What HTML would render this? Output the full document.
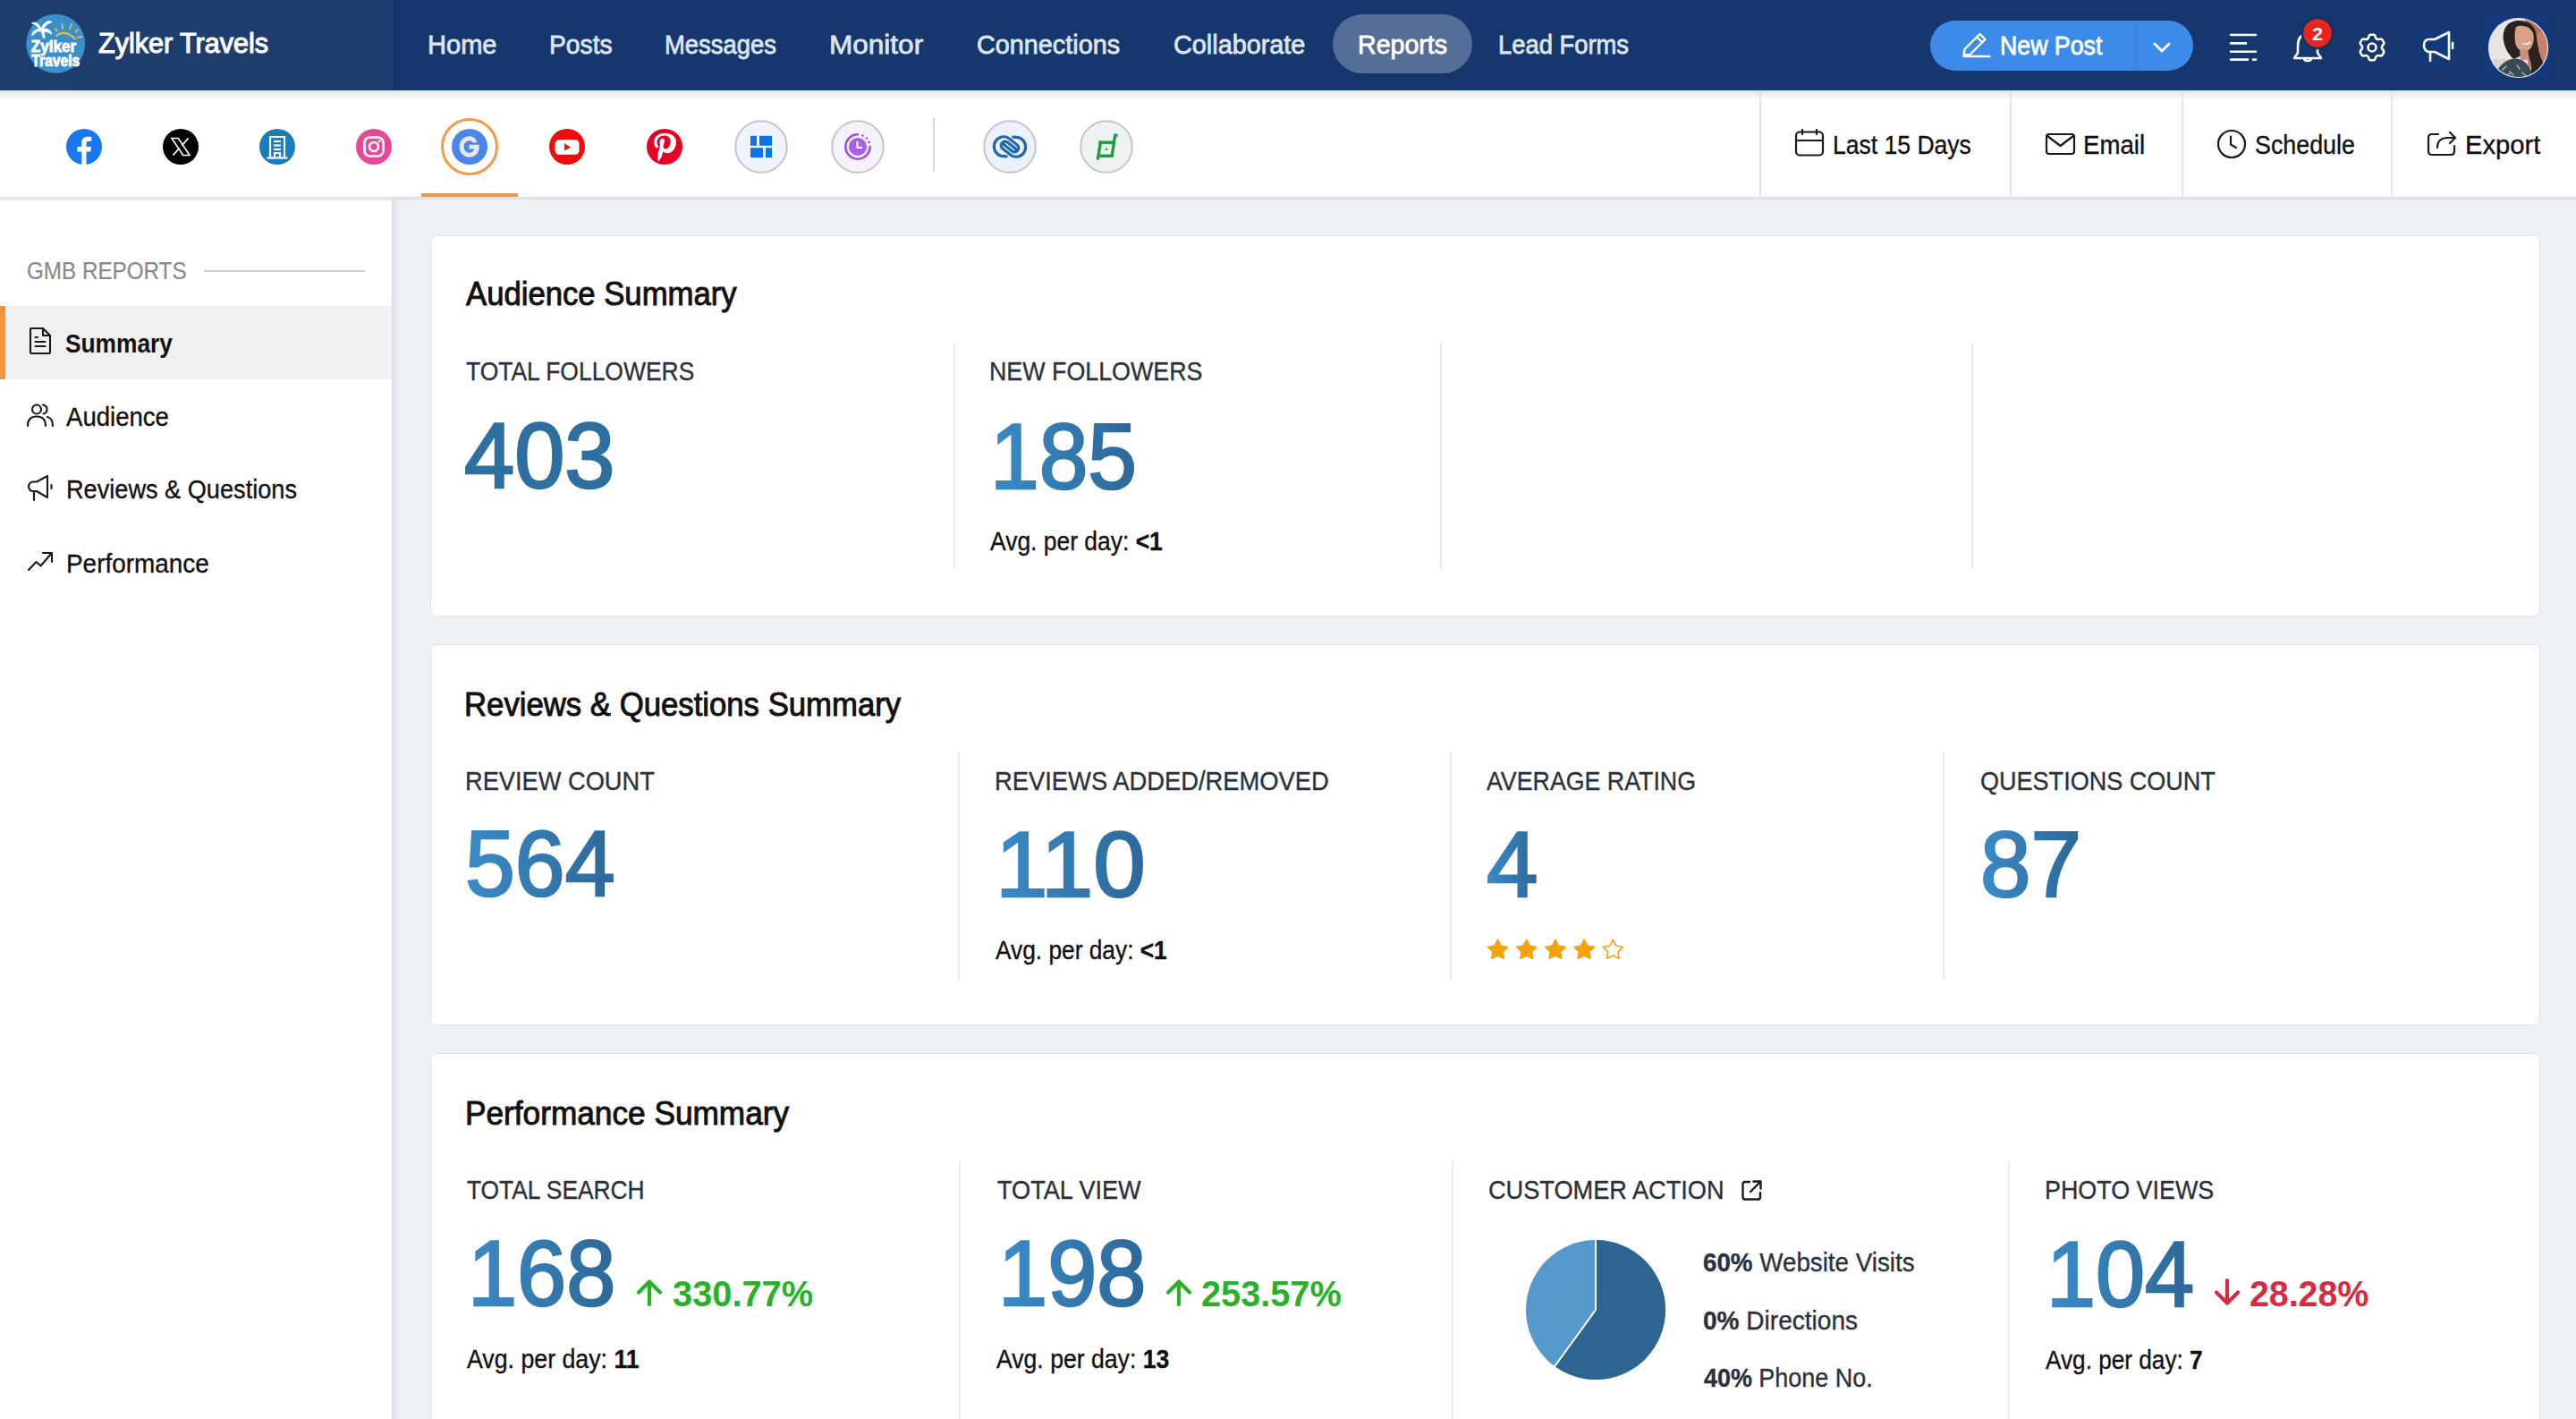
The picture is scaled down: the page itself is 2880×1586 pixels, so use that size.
<!DOCTYPE html>
<html><head><meta charset="utf-8"><title>Zylker Travels - GMB Reports</title><style>
*{box-sizing:border-box}
html,body{margin:0;padding:0}
body{width:2880px;height:1586px;overflow:hidden;position:relative;background:#eef1f6;font-family:"Liberation Sans",sans-serif}
.a{position:absolute}
.t{position:absolute;white-space:nowrap}
.t b{font-weight:700}
.num{background:linear-gradient(90deg,#3b8dcb 0%,#2c6796 100%);-webkit-background-clip:text;background-clip:text;color:transparent}
.card{position:absolute;left:481px;width:2359px;height:426px;background:#fff;border:1.5px solid #e0e2e6;border-radius:7px}
.vd{position:absolute;width:2px;background:#ececee}
.sep{position:absolute;top:101px;height:119px;width:1.5px;background:#e6e6e6}
</style></head><body>
<div class="a" style="left:0;top:0;width:2880px;height:101px;background:#15376d"></div>
<div class="a" style="left:0;top:0;width:440px;height:101px;background:#1e3d6f"></div>
<div class="a" style="left:440px;top:0;width:8px;height:101px;background:linear-gradient(90deg,rgba(0,0,0,0.07),rgba(0,0,0,0))"></div>
<div class="a" style="left:2703px;top:32px;width:42px;height:44px;background:#14397a"></div>
<div class="a" style="left:2777px;top:16px;width:75px;height:71px;background:#14397a"></div>
<div class="a" style="left:1490px;top:16px;width:156px;height:66px;border-radius:33px;background:#546e98"></div>
<div class="a" style="left:2158px;top:23px;width:294px;height:56px;border-radius:28px;background:#3d8be9"></div>
<div class="a" style="left:2387px;top:23px;width:1.5px;height:56px;background:#3a82db"></div>
<div class="a" style="left:0;top:101px;width:2880px;height:119px;background:#fff"></div>
<div class="a" style="left:0;top:101px;width:2880px;height:12px;background:linear-gradient(180deg,rgba(0,0,0,0.10),rgba(0,0,0,0))"></div>
<div class="sep" style="left:1967px"></div>
<div class="sep" style="left:2247px"></div>
<div class="sep" style="left:2439px"></div>
<div class="sep" style="left:2673px"></div>
<div class="a" style="left:1043px;top:132px;width:2px;height:60px;background:#d5d5d8"></div>
<div class="a" style="left:0;top:220px;width:438px;height:1366px;background:#fff"></div>
<div class="a" style="left:438px;top:220px;width:9px;height:1366px;background:linear-gradient(90deg,rgba(0,0,0,0.085),rgba(0,0,0,0))"></div>
<div class="a" style="left:0;top:219.5px;width:2880px;height:4px;background:linear-gradient(180deg,#dfe0e3,#e4e5e8 70%,rgba(228,229,232,0.4))"></div>
<div class="a" style="left:471px;top:216px;width:108px;height:4px;background:#f0954a"></div>
<div class="a" style="left:228px;top:302px;width:180px;height:2px;background:#cfcfd2"></div>
<div class="a" style="left:0;top:342px;width:438px;height:82px;background:#f0f0f0"></div>
<div class="a" style="left:0;top:342px;width:6px;height:82px;background:#f5933e"></div>
<div class="card" style="top:263px"></div>
<div class="card" style="top:720px"></div>
<div class="card" style="top:1177px"></div>
<div class="vd" style="left:1066px;top:383px;height:253px"></div>
<div class="vd" style="left:1610px;top:383px;height:253px"></div>
<div class="vd" style="left:2204px;top:383px;height:253px"></div>
<div class="vd" style="left:1071px;top:840px;height:255px"></div>
<div class="vd" style="left:1621px;top:840px;height:255px"></div>
<div class="vd" style="left:2172px;top:840px;height:255px"></div>
<div class="vd" style="left:1072px;top:1298px;height:300px"></div>
<div class="vd" style="left:1623px;top:1298px;height:300px"></div>
<div class="vd" style="left:2245px;top:1298px;height:300px"></div>
<svg class="a" style="left:29px;top:16px;overflow:visible" width="67" height="67" viewBox="0 0 67 67" ><circle cx="33.2" cy="32.8" r="33" fill="#3a90c9"/>
<path d="M34 23.8 Q44 16.5 55 27.5" stroke="#e9b553" stroke-width="2.2" fill="none" stroke-linecap="round"/>
<g stroke="#dcb862" stroke-width="1.8" stroke-linecap="round">
<line x1="33" y1="16.2" x2="34.6" y2="18.7"/><line x1="40.4" y1="10.8" x2="41" y2="16.2"/><line x1="51" y1="10.8" x2="49" y2="16.2"/><line x1="58.4" y1="17.1" x2="55.4" y2="19.6"/><line x1="62.6" y1="24.8" x2="57.6" y2="25.8"/></g>
<g fill="#ffffff" stroke="#ffffff" stroke-width="1.3" stroke-linejoin="round">
<path d="M16.5 16 C14 10 10 8.5 7 10 C10.5 10.5 13.5 13 15.5 17 Z"/>
<path d="M17.5 15.5 C20 9 25 7 28.5 8.5 C24.5 9.5 21 12.5 18.8 16.8 Z"/>
<path d="M16 17 C11 16 7.5 19 6.8 23.5 C9.5 20.5 12.5 18.5 16.2 18.6 Z"/>
<path d="M18.5 17 C23 15.5 27.5 17.5 28.5 21.5 C25.5 19.5 22 18.8 18.6 18.8 Z"/>
<path d="M16.6 17.5 C17.8 20 18.8 22.8 19.4 26 L21 26 C20.6 22.5 19.8 19.5 18.4 16.6 Z"/>
</g>
<text x="5.8" y="42" font-family="Liberation Sans" font-weight="700" font-size="18.5" fill="#fff" stroke="#fff" stroke-width="0.9" textLength="50.5" lengthAdjust="spacingAndGlyphs">Zylker</text>
<text x="6.3" y="58.2" font-family="Liberation Sans" font-weight="700" font-size="18" fill="#fff" stroke="#fff" stroke-width="0.9" textLength="54" lengthAdjust="spacingAndGlyphs">Travels</text></svg>
<svg class="a" style="left:2192px;top:32px;overflow:visible" width="36" height="34" viewBox="0 0 36 34" ><g fill="none" stroke="#fff" stroke-width="2.4" stroke-linejoin="round">
<path d="M3.5 29.5 L4.5 23 L21.5 6 L27.5 12 L10.5 29 Z"/><line x1="18.2" y1="9.3" x2="24.2" y2="15.3"/></g>
<line x1="2.5" y1="31" x2="33.5" y2="31" stroke="#fff" stroke-width="2.4"/></svg>
<svg class="a" style="left:2407px;top:47px;overflow:visible" width="20" height="13" viewBox="0 0 20 13" ><path d="M2 2 L10 10 L18 2" fill="none" stroke="#fff" stroke-width="3" stroke-linecap="round" stroke-linejoin="round"/></svg>
<svg class="a" style="left:2492px;top:36px;overflow:visible" width="32" height="34" viewBox="0 0 32 34" ><g stroke="#fff" stroke-width="2.6" stroke-linecap="round">
<line x1="2" y1="3" x2="30" y2="3"/><line x1="2" y1="12.4" x2="19" y2="12.4"/><line x1="2" y1="21.7" x2="30" y2="21.7"/><line x1="2" y1="30.6" x2="21" y2="30.6"/><line x1="27" y1="30.6" x2="30" y2="30.6"/></g></svg>
<svg class="a" style="left:2562px;top:34px;overflow:visible" width="36" height="38" viewBox="0 0 36 38" ><g fill="none" stroke="#fff" stroke-width="2.6" stroke-linejoin="round">
<path d="M18 4 C10 4 7 10 7 17 L7 25 L3 31 L33 31 L29 25 L29 17 C29 10 26 4 18 4 Z"/>
<path d="M14 31 C14 35 22 35 22 31"/></g></svg>
<svg class="a" style="left:2573px;top:19px;overflow:visible" width="36" height="36" viewBox="0 0 36 36" ><circle cx="18" cy="18" r="17" fill="#e8251f" stroke="#14305c" stroke-width="2.5"/><text x="18" y="26" text-anchor="middle" font-family="Liberation Sans" font-weight="700" font-size="21" fill="#fff">2</text></svg>
<svg class="a" style="left:2636px;top:37px;overflow:visible" width="32" height="32" viewBox="0 0 32 32" ><g fill="none" stroke="#fff" stroke-width="2.6" stroke-linejoin="round"><path d="M13.76 1.88 A14.3 14.3 0 0 1 18.24 1.88 Q19.55 2.77 20.04 4.91 Q21.00 7.34 23.58 6.96 Q25.69 6.31 27.11 7.00 A14.3 14.3 0 0 1 29.35 10.88 Q29.23 12.45 27.62 13.95 Q26.00 16.00 27.62 18.05 Q29.23 19.55 29.35 21.12 A14.3 14.3 0 0 1 27.11 25.00 Q25.69 25.69 23.58 25.04 Q21.00 24.66 20.04 27.09 Q19.55 29.23 18.24 30.12 A14.3 14.3 0 0 1 13.76 30.12 Q12.45 29.23 11.96 27.09 Q11.00 24.66 8.42 25.04 Q6.31 25.69 4.89 25.00 A14.3 14.3 0 0 1 2.65 21.12 Q2.77 19.55 4.38 18.05 Q6.00 16.00 4.38 13.95 Q2.77 12.45 2.65 10.88 A14.3 14.3 0 0 1 4.89 7.00 Q6.31 6.31 8.42 6.96 Q11.00 7.34 11.96 4.91 Q12.45 2.77 13.76 1.88 Z"/><circle cx="16" cy="16" r="4.5"/></g></svg>
<svg class="a" style="left:2708px;top:34px;overflow:visible" width="38" height="37" viewBox="0 0 38 37" ><g fill="none" stroke="#fff" stroke-width="2.6" stroke-linejoin="round" stroke-linecap="round">
<path d="M30 2 L30 32 L14 24 L8 24 C4 24 2 20 2 17 C2 13 4 10 8 10 L14 10 Z"/>
<line x1="9" y1="24" x2="9" y2="34"/><line x1="34" y1="14" x2="34" y2="20"/></g></svg>
<svg class="a" style="left:2782px;top:20px;overflow:visible" width="67" height="67" viewBox="0 0 67 67" ><defs><clipPath id="avc"><circle cx="33.5" cy="33.5" r="33"/></clipPath></defs>
<g clip-path="url(#avc)">
<rect width="67" height="67" fill="#e9e6e2"/>
<rect x="44" y="0" width="23" height="56" fill="#c7826c"/>
<path d="M40 0 L67 0 L67 14 L48 18 Z" fill="#bb705a"/>
<rect x="0" y="46" width="26" height="21" fill="#dcd6ca"/>
<path d="M17 26 C15 12 22 3 34 3 C46 3 54 10 54 22 C55 32 57 42 62 52 C64 60 60 67 54 67 L46 67 C50 56 48 46 42 40 L28 46 C24 42 19 36 17 26 Z" fill="#2b211e"/>
<path d="M31 10 C37 7 47 9 50 17 C52 25 50 33 44 37 C39 39 34 37 31 31 C29 25 29 16 31 10 Z" fill="#d9a287"/>
<path d="M35 35 L44 35 L46 46 L36 48 Z" fill="#c99278"/>
<path d="M8 62 C14 50 24 44 34 46 C42 48 48 56 50 67 L6 67 Z" fill="#3b4b53"/>
<g stroke="#a9b8bd" stroke-width="1.3" stroke-linecap="round"><path d="M16 58 L20 54"/><path d="M24 60 L28 64"/><path d="M32 53 L35 57"/><path d="M20 65 L24 62"/><path d="M38 61 L42 65"/></g>
<path d="M38 28 C41 30 44 30 47 27" stroke="#fff" stroke-width="1.4" fill="none"/>
</g><circle cx="33.5" cy="33.5" r="33" fill="none" stroke="#dfe6ef" stroke-width="1.2"/></svg>
<svg class="a" style="left:74px;top:144px;overflow:visible" width="40" height="40" viewBox="0 0 40 40" ><circle cx="20" cy="20" r="20" fill="#1877f2"/>
<path d="M22.5 40 L22.5 25.5 L27.3 25.5 L28 20 L22.5 20 L22.5 16.5 C22.5 14.9 23 13.8 25.3 13.8 L28.2 13.8 L28.2 8.9 C27.7 8.8 26 8.7 24.1 8.7 C20 8.7 17.2 11.2 17.2 15.8 L17.2 20 L12.4 20 L12.4 25.5 L17.2 25.5 L17.2 40 Z" fill="#fff"/></svg>
<svg class="a" style="left:182px;top:144px;overflow:visible" width="40" height="40" viewBox="0 0 40 40" ><circle cx="20" cy="20" r="20" fill="#000"/>
<path d="M10 10.5 L17.3 10.5 L30 29.5 L22.7 29.5 Z" fill="none" stroke="#fff" stroke-width="1.6"/>
<line x1="28.5" y1="10.5" x2="21.3" y2="18.6" stroke="#fff" stroke-width="1.8"/>
<line x1="11.5" y1="29.5" x2="18.6" y2="21.5" stroke="#fff" stroke-width="1.8"/></svg>
<svg class="a" style="left:290px;top:144px;overflow:visible" width="40" height="40" viewBox="0 0 40 40" ><circle cx="20" cy="20" r="20" fill="#1b7bbb"/>
<g fill="none" stroke="#fff" stroke-width="2.2"><path d="M12 32 L12 9 L28 9 L28 32"/><line x1="8.5" y1="32.5" x2="31.5" y2="32.5"/>
<line x1="16" y1="14" x2="24" y2="14"/><line x1="16" y1="18.5" x2="24" y2="18.5"/><line x1="16" y1="23" x2="24" y2="23"/><path d="M17 32 L17 27 L23 27 L23 32"/></g></svg>
<svg class="a" style="left:398px;top:144px;overflow:visible" width="40" height="40" viewBox="0 0 40 40" ><circle cx="20" cy="20" r="20" fill="#e8489a"/>
<rect x="9.5" y="9.5" width="21" height="21" rx="6" fill="none" stroke="#fff" stroke-width="2.6"/>
<circle cx="20" cy="20" r="5" fill="none" stroke="#fff" stroke-width="2.6"/><circle cx="26.2" cy="13.8" r="1.5" fill="#fff"/></svg>
<svg class="a" style="left:493px;top:132px;overflow:visible" width="64" height="64" viewBox="0 0 64 64" ><circle cx="32" cy="32" r="30.5" fill="#fff" stroke="#ef9a4c" stroke-width="3"/>
<circle cx="32" cy="32" r="20" fill="#4a86e8"/>
<path d="M40.5 27 C39 22.6 35.6 20.2 31.7 20.2 C25.4 20.2 20.6 25.4 20.6 32 C20.6 38.6 25.4 43.8 31.7 43.8 C37.6 43.8 42.8 39.6 42.8 32 L42.8 29.8 L31.6 29.8 L31.6 34.6 L37.4 34.6 C36.6 37.2 34.4 38.8 31.7 38.8 C28.2 38.8 25.6 35.8 25.6 32 C25.6 28.2 28.2 25.2 31.7 25.2 C33.7 25.2 35.4 26.2 36.4 27.8 Z" fill="#e7e7ec"/></svg>
<svg class="a" style="left:614px;top:144px;overflow:visible" width="40" height="40" viewBox="0 0 40 40" ><circle cx="20" cy="20" r="20" fill="#f10b0b"/>
<rect x="6.5" y="12.3" width="27" height="16.5" rx="4.5" fill="#fff"/><path d="M17 16.3 L24 20.5 L17 24.5 Z" fill="#f10b0b"/></svg>
<svg class="a" style="left:723px;top:144px;overflow:visible" width="40" height="40" viewBox="0 0 40 40" ><circle cx="20" cy="20" r="20" fill="#e60023"/>
<path transform="translate(20 20) scale(1.13) translate(-20.5 -21)" d="M20.5 7.5 C13.5 7.5 10 12.3 10 16.5 C10 19.2 11 21.5 13.1 22.4 C13.5 22.5 13.8 22.4 13.9 22 L14.3 20.6 C14.4 20.2 14.3 20 14 19.7 C13.4 19 13 18 13 16.7 C13 12.7 16 9.9 20.3 9.9 C24.1 9.9 26.3 12.2 26.3 15.5 C26.3 19.8 24.4 23.3 21.6 23.3 C20 23.3 18.9 22 19.2 20.4 C19.6 18.5 20.5 16.5 20.5 15.1 C20.5 13.9 19.8 12.9 18.5 12.9 C16.9 12.9 15.6 14.5 15.6 16.8 C15.6 18.2 16.1 19.2 16.1 19.2 L14.2 27.3 C13.7 29.7 14 32.6 14.1 35 C14.2 35.4 14.6 35.5 14.8 35.2 C15.5 34.3 17.4 31.6 18 29.6 L19.1 25.4 C19.7 26.5 21.3 27.4 23.1 27.4 C28.4 27.4 32 22.6 32 16.2 C32 11.3 27.8 7.5 20.5 7.5 Z" fill="#fff"/></svg>
<svg class="a" style="left:821px;top:134px;overflow:visible" width="60" height="60" viewBox="0 0 60 60" ><circle cx="30" cy="30" r="28.8" fill="#eff4fc" stroke="#c4c5c9" stroke-width="2"/>
<g fill="#0b74e6"><rect x="18" y="17.8" width="7" height="11"/><rect x="28" y="17.8" width="14" height="11"/><rect x="18" y="31.2" width="14" height="11"/><rect x="35" y="31.2" width="7" height="11"/></g></svg>
<svg class="a" style="left:929px;top:134px;overflow:visible" width="60" height="60" viewBox="0 0 60 60" ><circle cx="30" cy="30" r="28.8" fill="#f6f1fb" stroke="#c4c5c9" stroke-width="2"/>
<path d="M30 16.3 A13.7 13.7 0 1 0 43.7 30" fill="none" stroke="#9c52d8" stroke-width="2.6" stroke-linecap="round"/>
<circle cx="30" cy="30" r="10" fill="#a95ee6"/>
<path d="M29.5 24 L29.5 31 L35 31" fill="none" stroke="#fff" stroke-width="2"/>
<g fill="#9c52d8"><circle cx="35.5" cy="17.5" r="1.3"/><circle cx="40" cy="20.5" r="1.3"/><circle cx="42.5" cy="25" r="1.3"/></g></svg>
<svg class="a" style="left:1099px;top:134px;overflow:visible" width="60" height="60" viewBox="0 0 60 60" ><circle cx="30" cy="30" r="28.8" fill="#ebf2fb" stroke="#c4c5c9" stroke-width="2"/>
<g fill="none" stroke="#2068aa" stroke-width="2.5" stroke-linecap="round" transform="translate(30 30) scale(1.27) translate(-30 -30)">
<path d="M27 38.5 C24 38.5 22 38.5 20 37 C16 34.5 15 29 17.5 25 C20 21 25.5 20 29 22.5 L36.5 28.5 C38.5 30 38 33 36 34 C34.5 35 33 34.8 31.5 33.5 L24 27.5"/>
<path d="M33 21.5 C36 21.5 38 21.5 40 23 C44 25.5 45 31 42.5 35 C40 39 34.5 40 31 37.5 L23.5 31.5 C21.5 30 22 27 24 26 C25.5 25 27 25.2 28.5 26.5 L36 32.5"/></g></svg>
<svg class="a" style="left:1207px;top:134px;overflow:visible" width="60" height="60" viewBox="0 0 60 60" ><circle cx="30" cy="30" r="28.8" fill="#eff3ef" stroke="#c4c5c9" stroke-width="2"/>
<g fill="none" stroke="#1c9a44" stroke-width="3.4" stroke-linejoin="miter">
<path d="M21.5 25.2 L38 25.2"/><path d="M39.6 17.5 L36.2 40.2 L22.6 40.2"/><path d="M23.6 23.6 L20.3 44.5"/><path d="M38.2 17.2 L42.5 17.2"/></g>
<rect x="28.6" y="31.6" width="2.6" height="2.2" fill="#1c9a44"/></svg>
<svg class="a" style="left:2006px;top:144px;overflow:visible" width="34" height="31" viewBox="0 0 34 31" ><g fill="none" stroke="#1a1a1a" stroke-width="2.2" stroke-linecap="round" stroke-linejoin="round"><rect x="2" y="3.5" width="30" height="26" rx="4"/><line x1="2" y1="13" x2="32" y2="13"/><line x1="9" y1="1" x2="9" y2="6"/><line x1="25" y1="1" x2="25" y2="6"/></g></svg>
<svg class="a" style="left:2286px;top:148px;overflow:visible" width="35" height="26" viewBox="0 0 35 26" ><g fill="none" stroke="#1a1a1a" stroke-width="2.2" stroke-linecap="round" stroke-linejoin="round"><rect x="2" y="2" width="31" height="22" rx="3"/><path d="M3 4 L17.5 15 L32 4"/></g></svg>
<svg class="a" style="left:2478px;top:144px;overflow:visible" width="35" height="35" viewBox="0 0 35 35" ><g fill="none" stroke="#1a1a1a" stroke-width="2.2" stroke-linecap="round" stroke-linejoin="round"><circle cx="17" cy="17" r="15"/><path d="M16 8.5 L16 17.5 L22 21"/></g></svg>
<svg class="a" style="left:2713px;top:143px;overflow:visible" width="35" height="33" viewBox="0 0 35 33" ><g fill="none" stroke="#1a1a1a" stroke-width="2.2" stroke-linecap="round" stroke-linejoin="round"><path d="M13 7 L6 7 C3.5 7 2 8.5 2 11 L2 26 C2 28.5 3.5 30 6 30 L27 30 C29.5 30 31 28.5 31 26 L31 20"/><path d="M12 22 C12 15 16 11 24 11 L32 11"/><path d="M26 5 L32 11 L26 17"/></g></svg>
<svg class="a" style="left:31px;top:365px;overflow:visible" width="28" height="33" viewBox="0 0 28 33" ><g fill="none" stroke="#1a1a1a" stroke-width="2.1" stroke-linecap="round" stroke-linejoin="round"><path d="M3 3 C3 2.3 3.5 2 4 2 L17 2 L25 10 L25 29 C25 29.7 24.5 30 24 30 L4 30 C3.5 30 3 29.7 3 29 Z"/><path d="M17 2 L17 10 L25 10"/><line x1="8.5" y1="17" x2="19.5" y2="17"/><line x1="8.5" y1="22" x2="19.5" y2="22"/><line x1="8.5" y1="12" x2="11" y2="12"/></g></svg>
<svg class="a" style="left:29px;top:450px;overflow:visible" width="32" height="28" viewBox="0 0 32 28" ><g fill="none" stroke="#1a1a1a" stroke-width="2.1" stroke-linecap="round" stroke-linejoin="round"><circle cx="12" cy="7.5" r="5"/><path d="M2 26 C2 19 6 15.5 12 15.5 C18 15.5 22 19 22 26"/><path d="M19 2.5 C22 3 23.5 5 23.5 7.5 C23.5 10 22 12 19.5 12.5"/><path d="M24 16 C27.5 17 30 20.5 30 26"/></g></svg>
<svg class="a" style="left:30px;top:529px;overflow:visible" width="31" height="32" viewBox="0 0 31 32" ><g fill="none" stroke="#1a1a1a" stroke-width="2.1" stroke-linecap="round" stroke-linejoin="round"><path d="M23 3 L23 27 L11 20 L7 20 C4 20 2 17.5 2 15 C2 12 4 9.5 7 9.5 L11 9.5 Z"/><line x1="8" y1="20" x2="8" y2="30"/><line x1="27.5" y1="13" x2="27.5" y2="17"/></g></svg>
<svg class="a" style="left:30px;top:615px;overflow:visible" width="31" height="25" viewBox="0 0 31 25" ><g fill="none" stroke="#1a1a1a" stroke-width="2.1" stroke-linecap="round" stroke-linejoin="round"><path d="M2 22 L10.5 13 L15.5 17.5 L27 4"/><path d="M18 3 L28 3 L28 13"/></g></svg>
<svg class="a" style="left:1662px;top:1049px;overflow:visible" width="170" height="26" viewBox="0 0 170 26" ><polygon points="12.50,1.00 16.20,7.90 23.91,9.29 18.49,14.95 19.55,22.71 12.50,19.30 5.45,22.71 6.51,14.95 1.09,9.29 8.80,7.90" fill="#f5a20e" stroke="#f5a20e" stroke-width="1.2" stroke-linejoin="round"/><polygon points="44.70,1.00 48.40,7.90 56.11,9.29 50.69,14.95 51.75,22.71 44.70,19.30 37.65,22.71 38.71,14.95 33.29,9.29 41.00,7.90" fill="#f5a20e" stroke="#f5a20e" stroke-width="1.2" stroke-linejoin="round"/><polygon points="76.90,1.00 80.60,7.90 88.31,9.29 82.89,14.95 83.95,22.71 76.90,19.30 69.85,22.71 70.91,14.95 65.49,9.29 73.20,7.90" fill="#f5a20e" stroke="#f5a20e" stroke-width="1.2" stroke-linejoin="round"/><polygon points="109.10,1.00 112.80,7.90 120.51,9.29 115.09,14.95 116.15,22.71 109.10,19.30 102.05,22.71 103.11,14.95 97.69,9.29 105.40,7.90" fill="#f5a20e" stroke="#f5a20e" stroke-width="1.2" stroke-linejoin="round"/><polygon points="141.30,1.40 144.83,8.15 152.33,9.42 147.01,14.85 148.12,22.38 141.30,19.00 134.48,22.38 135.59,14.85 130.27,9.42 137.77,8.15" fill="none" stroke="#f5a20e" stroke-width="1.6" stroke-linejoin="round"/></svg>
<svg class="a" style="left:710px;top:1429px;overflow:visible" width="32" height="32" viewBox="0 0 32 32" ><g fill="none" stroke="#27b227" stroke-width="4.2" stroke-linecap="round" stroke-linejoin="round"><line x1="16" y1="4" x2="16" y2="29"/><path d="M4 15.5 L16 3.5 L28 15.5"/></g></svg>
<svg class="a" style="left:1302px;top:1429px;overflow:visible" width="32" height="32" viewBox="0 0 32 32" ><g fill="none" stroke="#27b227" stroke-width="4.2" stroke-linecap="round" stroke-linejoin="round"><line x1="16" y1="4" x2="16" y2="29"/><path d="M4 15.5 L16 3.5 L28 15.5"/></g></svg>
<svg class="a" style="left:2474px;top:1429px;overflow:visible" width="32" height="32" viewBox="0 0 32 32" ><g fill="none" stroke="#d92a42" stroke-width="4.2" stroke-linecap="round" stroke-linejoin="round"><line x1="16" y1="2" x2="16" y2="27"/><path d="M4 15.5 L16 27.5 L28 15.5"/></g></svg>
<svg class="a" style="left:1946px;top:1318px;overflow:visible" width="26" height="25" viewBox="0 0 26 25" ><g fill="none" stroke="#1a1a1a" stroke-width="2.4" stroke-linecap="round" stroke-linejoin="round"><path d="M10 3 L5 3 C3.5 3 2.5 4 2.5 5.5 L2.5 20 C2.5 21.5 3.5 22.5 5 22.5 L19.5 22.5 C21 22.5 22 21.5 22 20 L22 15"/><path d="M11 14 L22 3"/><path d="M14.5 2.5 L22.5 2.5 L22.5 10.5"/></g></svg>
<svg class="a" style="left:1704px;top:1384px;overflow:visible" width="160" height="160" viewBox="0 0 160 160" ><g transform="translate(80,80)">
<circle r="78" fill="#5598cb"/>
<path d="M0 0 L0 -78 A78 78 0 1 1 -45.85 63.10 Z" fill="#2d6590"/>
<line x1="0" y1="0" x2="0" y2="-79" stroke="#fff" stroke-width="2"/>
<line x1="0" y1="0" x2="-46.76" y2="64.37" stroke="#fff" stroke-width="2"/></g></svg>
<div class="t" style="left:110.0px;top:33.4px;font-size:31px;line-height:31px;font-weight:400;color:#ffffff;transform:scaleX(0.9845);transform-origin:0 0;-webkit-text-stroke:1.1px #ffffff;">Zylker Travels</div>
<div class="t" style="left:477.5px;top:35.0px;font-size:30px;line-height:30px;font-weight:400;color:#dce5f3;transform:scaleX(0.9688);transform-origin:0 0;-webkit-text-stroke:0.8px #dce5f3;">Home</div>
<div class="t" style="left:614.1px;top:35.0px;font-size:30px;line-height:30px;font-weight:400;color:#dce5f3;transform:scaleX(0.9417);transform-origin:0 0;-webkit-text-stroke:0.8px #dce5f3;">Posts</div>
<div class="t" style="left:743.2px;top:35.0px;font-size:30px;line-height:30px;font-weight:400;color:#dce5f3;transform:scaleX(0.9142);transform-origin:0 0;-webkit-text-stroke:0.8px #dce5f3;">Messages</div>
<div class="t" style="left:926.9px;top:35.0px;font-size:30px;line-height:30px;font-weight:400;color:#dce5f3;transform:scaleX(1.051);transform-origin:0 0;-webkit-text-stroke:0.8px #dce5f3;">Monitor</div>
<div class="t" style="left:1092.0px;top:35.0px;font-size:30px;line-height:30px;font-weight:400;color:#dce5f3;transform:scaleX(0.96);transform-origin:0 0;-webkit-text-stroke:0.8px #dce5f3;">Connections</div>
<div class="t" style="left:1311.7px;top:35.0px;font-size:30px;line-height:30px;font-weight:400;color:#dce5f3;transform:scaleX(0.9605);transform-origin:0 0;-webkit-text-stroke:0.8px #dce5f3;">Collaborate</div>
<div class="t" style="left:1518.0px;top:35.0px;font-size:30px;line-height:30px;font-weight:400;color:#ffffff;transform:scaleX(0.952);transform-origin:0 0;-webkit-text-stroke:0.8px #ffffff;">Reports</div>
<div class="t" style="left:1674.9px;top:35.0px;font-size:30px;line-height:30px;font-weight:400;color:#dce5f3;transform:scaleX(0.9121);transform-origin:0 0;-webkit-text-stroke:0.8px #dce5f3;">Lead Forms</div>
<div class="t" style="left:2235.8px;top:37.0px;font-size:29px;line-height:29px;font-weight:400;color:#ffffff;transform:scaleX(0.9213);transform-origin:0 0;-webkit-text-stroke:0.8px #ffffff;">New Post</div>
<div class="t" style="left:2049.4px;top:147.0px;font-size:29.5px;line-height:29.5px;font-weight:400;color:#111111;transform:scaleX(0.8994);transform-origin:0 0;-webkit-text-stroke:0.35px #111111;">Last 15 Days</div>
<div class="t" style="left:2328.6px;top:147.0px;font-size:29.5px;line-height:29.5px;font-weight:400;color:#111111;transform:scaleX(0.9357);transform-origin:0 0;-webkit-text-stroke:0.35px #111111;">Email</div>
<div class="t" style="left:2521.1px;top:147.0px;font-size:29.5px;line-height:29.5px;font-weight:400;color:#111111;transform:scaleX(0.9091);transform-origin:0 0;-webkit-text-stroke:0.35px #111111;">Schedule</div>
<div class="t" style="left:2755.5px;top:147.0px;font-size:29.5px;line-height:29.5px;font-weight:400;color:#111111;transform:scaleX(0.9892);transform-origin:0 0;-webkit-text-stroke:0.35px #111111;">Export</div>
<div class="t" style="left:29.9px;top:289.7px;font-size:27px;line-height:27px;font-weight:400;color:#8a8a8a;transform:scaleX(0.897);transform-origin:0 0;-webkit-text-stroke:0.2px #8a8a8a;">GMB REPORTS</div>
<div class="t" style="left:73.1px;top:369.0px;font-size:29.5px;line-height:29.5px;font-weight:700;color:#111111;transform:scaleX(0.8917);transform-origin:0 0;">Summary</div>
<div class="t" style="left:74.4px;top:451.0px;font-size:29.5px;line-height:29.5px;font-weight:400;color:#111111;transform:scaleX(0.9344);transform-origin:0 0;-webkit-text-stroke:0.35px #111111;">Audience</div>
<div class="t" style="left:73.8px;top:532.4px;font-size:29.5px;line-height:29.5px;font-weight:400;color:#111111;transform:scaleX(0.9201);transform-origin:0 0;-webkit-text-stroke:0.35px #111111;">Reviews &amp; Questions</div>
<div class="t" style="left:73.7px;top:614.8px;font-size:29.5px;line-height:29.5px;font-weight:400;color:#111111;transform:scaleX(0.9458);transform-origin:0 0;-webkit-text-stroke:0.35px #111111;">Performance</div>
<div class="t" style="left:521.3px;top:310.0px;font-size:37px;line-height:37px;font-weight:400;color:#111111;transform:scaleX(0.9372);transform-origin:0 0;-webkit-text-stroke:0.95px #111111;">Audience Summary</div>
<div class="t" style="left:521.0px;top:399.7px;font-size:29.5px;line-height:29.5px;font-weight:400;color:#2b313b;transform:scaleX(0.8968);transform-origin:0 0;-webkit-text-stroke:0.35px #2b313b;">TOTAL FOLLOWERS</div>
<svg class="a" style="left:518.6px;top:456.8px;overflow:visible" width="260" height="104"><text x="0" y="88" transform="scale(0.971 1)" font-family="Liberation Sans" font-size="104" letter-spacing="0" fill="#2d6fa0" stroke="#2d6fa0" stroke-width="2.6">403</text></svg>
<div class="t" style="left:1106.2px;top:399.8px;font-size:29.5px;line-height:29.5px;font-weight:400;color:#2b313b;transform:scaleX(0.9093);transform-origin:0 0;-webkit-text-stroke:0.35px #2b313b;">NEW FOLLOWERS</div>
<svg class="a" style="left:1107.4px;top:457.6px;overflow:visible" width="260" height="104"><defs><linearGradient id="ga4" x1="0" x2="1" y1="0" y2="0"><stop offset="0" stop-color="#3a8bc7"/><stop offset="1" stop-color="#2d6898"/></linearGradient></defs><text x="0" y="88" transform="scale(0.9451 1)" font-family="Liberation Sans" font-size="104" letter-spacing="0" fill="url(#ga4)" stroke="url(#ga4)" stroke-width="2.6">185</text></svg>
<div class="t" style="left:1107.0px;top:590.0px;font-size:29.5px;line-height:29.5px;font-weight:400;color:#111111;transform:scaleX(0.8963);transform-origin:0 0;-webkit-text-stroke:0.35px #111111;">Avg. per day: <b>&lt;1</b></div>
<div class="t" style="left:518.8px;top:768.8px;font-size:37px;line-height:37px;font-weight:400;color:#111111;transform:scaleX(0.9384);transform-origin:0 0;-webkit-text-stroke:0.95px #111111;">Reviews &amp; Questions Summary</div>
<div class="t" style="left:519.8px;top:858.2px;font-size:29.5px;line-height:29.5px;font-weight:400;color:#2b313b;transform:scaleX(0.9233);transform-origin:0 0;-webkit-text-stroke:0.35px #2b313b;">REVIEW COUNT</div>
<svg class="a" style="left:520.4px;top:913.2px;overflow:visible" width="260" height="104"><defs><linearGradient id="gr2" x1="0" x2="1" y1="0" y2="0"><stop offset="0" stop-color="#3a8bc7"/><stop offset="1" stop-color="#2d6898"/></linearGradient></defs><text x="0" y="88" transform="scale(0.9651 1)" font-family="Liberation Sans" font-size="104" letter-spacing="0" fill="url(#gr2)" stroke="url(#gr2)" stroke-width="2.6">564</text></svg>
<div class="t" style="left:1111.7px;top:858.2px;font-size:29.5px;line-height:29.5px;font-weight:400;color:#2b313b;transform:scaleX(0.927);transform-origin:0 0;-webkit-text-stroke:0.35px #2b313b;">REVIEWS ADDED/REMOVED</div>
<svg class="a" style="left:1112.9px;top:914.4px;overflow:visible" width="260" height="104"><defs><linearGradient id="gr4" x1="0" x2="1" y1="0" y2="0"><stop offset="0" stop-color="#3a8bc7"/><stop offset="1" stop-color="#2d6898"/></linearGradient></defs><text x="0" y="88" transform="scale(1.0115 1)" font-family="Liberation Sans" font-size="104" letter-spacing="0" fill="url(#gr4)" stroke="url(#gr4)" stroke-width="2.6">110</text></svg>
<div class="t" style="left:1113.0px;top:1047.0px;font-size:29.5px;line-height:29.5px;font-weight:400;color:#111111;transform:scaleX(0.8912);transform-origin:0 0;-webkit-text-stroke:0.35px #111111;">Avg. per day: <b>&lt;1</b></div>
<div class="t" style="left:1662.4px;top:858.2px;font-size:29.5px;line-height:29.5px;font-weight:400;color:#2b313b;transform:scaleX(0.9074);transform-origin:0 0;-webkit-text-stroke:0.35px #2b313b;">AVERAGE RATING</div>
<svg class="a" style="left:1662.0px;top:914.4px;overflow:visible" width="260" height="104"><defs><linearGradient id="gr7" x1="0" x2="1" y1="0" y2="0"><stop offset="0" stop-color="#3a8bc7"/><stop offset="1" stop-color="#2d6898"/></linearGradient></defs><text x="0" y="88" transform="scale(0.9927 1)" font-family="Liberation Sans" font-size="104" letter-spacing="0" fill="url(#gr7)" stroke="url(#gr7)" stroke-width="2.6">4</text></svg>
<div class="t" style="left:2213.9px;top:858.2px;font-size:29.5px;line-height:29.5px;font-weight:400;color:#2b313b;transform:scaleX(0.9165);transform-origin:0 0;-webkit-text-stroke:0.35px #2b313b;">QUESTIONS COUNT</div>
<svg class="a" style="left:2214.1px;top:914.4px;overflow:visible" width="260" height="104"><defs><linearGradient id="gr9" x1="0" x2="1" y1="0" y2="0"><stop offset="0" stop-color="#3a8bc7"/><stop offset="1" stop-color="#2d6898"/></linearGradient></defs><text x="0" y="88" transform="scale(0.9771 1)" font-family="Liberation Sans" font-size="104" letter-spacing="0" fill="url(#gr9)" stroke="url(#gr9)" stroke-width="2.6">87</text></svg>
<div class="t" style="left:520.3px;top:1226.0px;font-size:37px;line-height:37px;font-weight:400;color:#111111;transform:scaleX(0.9519);transform-origin:0 0;-webkit-text-stroke:0.95px #111111;">Performance Summary</div>
<div class="t" style="left:522.3px;top:1315.0px;font-size:29.5px;line-height:29.5px;font-weight:400;color:#2b313b;transform:scaleX(0.8932);transform-origin:0 0;-webkit-text-stroke:0.35px #2b313b;">TOTAL SEARCH</div>
<svg class="a" style="left:523.0px;top:1371.0px;overflow:visible" width="260" height="104"><defs><linearGradient id="gp2" x1="0" x2="1" y1="0" y2="0"><stop offset="0" stop-color="#3a8bc7"/><stop offset="1" stop-color="#2d6898"/></linearGradient></defs><text x="0" y="88" transform="scale(0.9528 1)" font-family="Liberation Sans" font-size="104" letter-spacing="0" fill="url(#gp2)" stroke="url(#gp2)" stroke-width="2.6">168</text></svg>
<div class="t" style="left:751.5px;top:1424.7px;font-size:41.5px;line-height:41.5px;font-weight:700;color:#27b227;transform:scaleX(0.9593);transform-origin:0 0;">330.77%</div>
<div class="t" style="left:522.3px;top:1504.4px;font-size:29.5px;line-height:29.5px;font-weight:400;color:#111111;transform:scaleX(0.9061);transform-origin:0 0;-webkit-text-stroke:0.35px #111111;">Avg. per day: <b>11</b></div>
<div class="t" style="left:1114.7px;top:1315.0px;font-size:29.5px;line-height:29.5px;font-weight:400;color:#2b313b;transform:scaleX(0.9189);transform-origin:0 0;-webkit-text-stroke:0.35px #2b313b;">TOTAL VIEW</div>
<svg class="a" style="left:1115.7px;top:1371.0px;overflow:visible" width="260" height="104"><defs><linearGradient id="gp6" x1="0" x2="1" y1="0" y2="0"><stop offset="0" stop-color="#3a8bc7"/><stop offset="1" stop-color="#2d6898"/></linearGradient></defs><text x="0" y="88" transform="scale(0.9534 1)" font-family="Liberation Sans" font-size="104" letter-spacing="0" fill="url(#gp6)" stroke="url(#gp6)" stroke-width="2.6">198</text></svg>
<div class="t" style="left:1343.0px;top:1424.7px;font-size:41.5px;line-height:41.5px;font-weight:700;color:#27b227;transform:scaleX(0.9568);transform-origin:0 0;">253.57%</div>
<div class="t" style="left:1114.0px;top:1504.4px;font-size:29.5px;line-height:29.5px;font-weight:400;color:#111111;transform:scaleX(0.9019);transform-origin:0 0;-webkit-text-stroke:0.35px #111111;">Avg. per day: <b>13</b></div>
<div class="t" style="left:1664.1px;top:1315.0px;font-size:29.5px;line-height:29.5px;font-weight:400;color:#2b313b;transform:scaleX(0.9205);transform-origin:0 0;-webkit-text-stroke:0.35px #2b313b;">CUSTOMER ACTION</div>
<div class="t" style="left:1903.9px;top:1396.3px;font-size:29.5px;line-height:29.5px;font-weight:400;color:#2b313b;transform:scaleX(0.9408);transform-origin:0 0;-webkit-text-stroke:0.35px #2b313b;"><b>60%</b> Website Visits</div>
<div class="t" style="left:1903.8px;top:1460.6px;font-size:29.5px;line-height:29.5px;font-weight:400;color:#2b313b;transform:scaleX(0.9511);transform-origin:0 0;-webkit-text-stroke:0.35px #2b313b;"><b>0%</b> Directions</div>
<div class="t" style="left:1904.8px;top:1524.5px;font-size:29.5px;line-height:29.5px;font-weight:400;color:#2b313b;transform:scaleX(0.9127);transform-origin:0 0;-webkit-text-stroke:0.35px #2b313b;"><b>40%</b> Phone No.</div>
<div class="t" style="left:2286.2px;top:1315.0px;font-size:29.5px;line-height:29.5px;font-weight:400;color:#2b313b;transform:scaleX(0.9112);transform-origin:0 0;-webkit-text-stroke:0.35px #2b313b;">PHOTO VIEWS</div>
<svg class="a" style="left:2288.3px;top:1371.7px;overflow:visible" width="260" height="104"><defs><linearGradient id="gpe" x1="0" x2="1" y1="0" y2="0"><stop offset="0" stop-color="#3a8bc7"/><stop offset="1" stop-color="#2d6898"/></linearGradient></defs><text x="0" y="88" transform="scale(0.9515 1)" font-family="Liberation Sans" font-size="104" letter-spacing="0" fill="url(#gpe)" stroke="url(#gpe)" stroke-width="2.6">104</text></svg>
<div class="t" style="left:2515.1px;top:1424.7px;font-size:41.5px;line-height:41.5px;font-weight:700;color:#d92a42;transform:scaleX(0.9468);transform-origin:0 0;">28.28%</div>
<div class="t" style="left:2286.8px;top:1504.8px;font-size:29.5px;line-height:29.5px;font-weight:400;color:#111111;transform:scaleX(0.8873);transform-origin:0 0;-webkit-text-stroke:0.35px #111111;">Avg. per day: <b>7</b></div>
</body></html>
